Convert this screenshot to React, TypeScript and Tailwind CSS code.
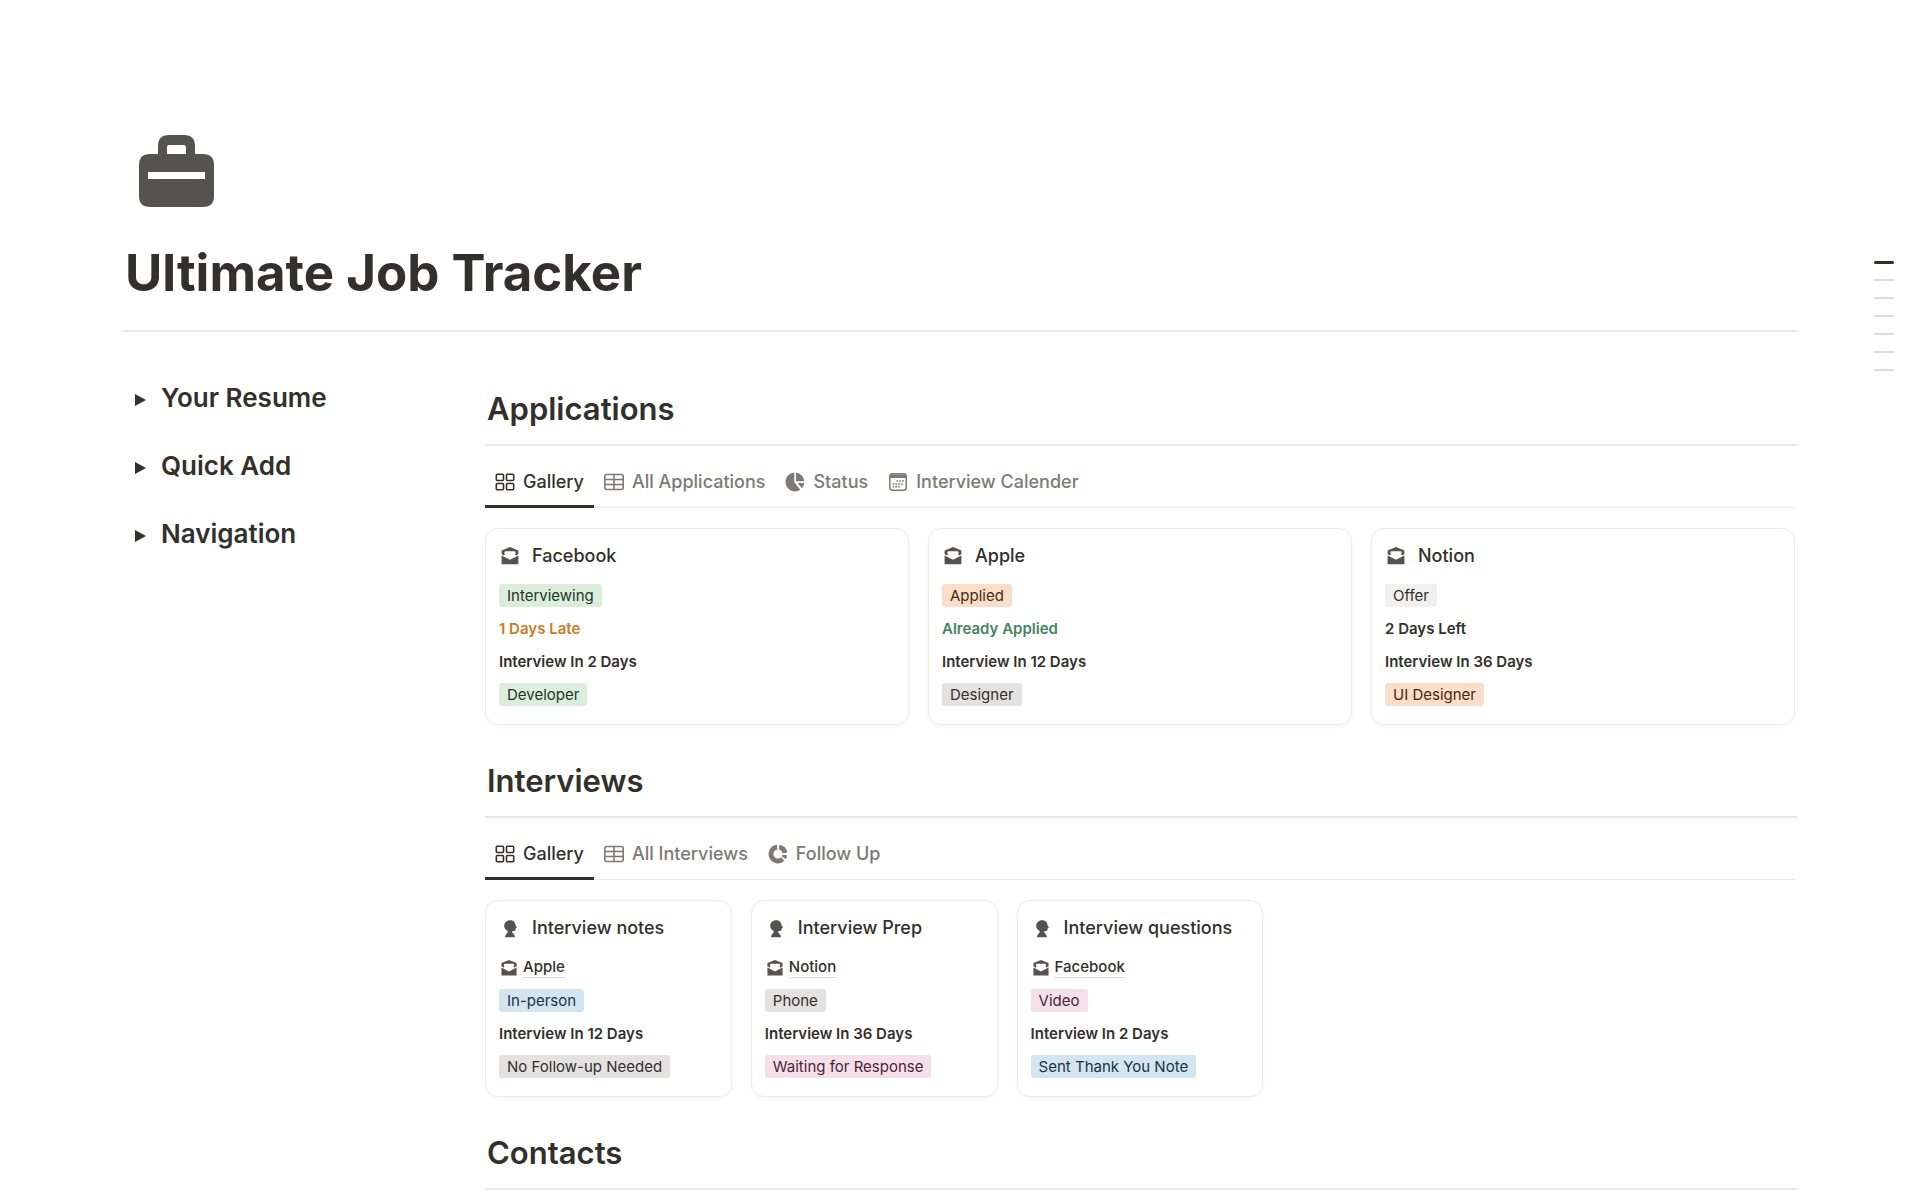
import { useState } from "react";
import type { ReactNode } from "react";
import clsx from "clsx";

type Color = "green" | "orange" | "gray" | "light" | "blue" | "pink";

type Line =
  | { kind: "tag"; text: string; color: Color }
  | { kind: "text"; text: string; tone?: "amber" | "green" }
  | { kind: "relation"; text: string };

interface Item {
  title: string;
  lines: Line[];
}

interface View {
  label: string;
  icon: ReactNode;
}

const tagColors: Record<Color, string> = {
  green: "bg-[#dbeddb] text-[#1c3829]",
  orange: "bg-[#fadec9] text-[#49290e]",
  gray: "bg-[#e3e2e0] text-[#32302c]",
  light: "bg-[#f1f0ef] text-[#32302c]",
  blue: "bg-[#d3e5ef] text-[#183347]",
  pink: "bg-[#f5e0e9] text-[#4c2337]",
};

const tones = {
  amber: "text-[#cb7b25]",
  green: "text-[#448361]",
};

const BriefcaseIcon = () => (
  <svg width="75" height="72" viewBox="0 0 75 72" fill="#55534e" aria-hidden="true">
    <path
      fillRule="evenodd"
      d="M19 19V11Q19 0 30 0H45Q56 0 56 11V19H64Q75 19 75 30V61Q75 72 64 72H11Q0 72 0 61V30Q0 19 11 19ZM28 19H47V12Q47 10 45 10H30Q28 10 28 12ZM9 37V44H66V37Z"
    />
  </svg>
);

const MailIcon = ({ size }: { size: number }) => (
  <svg width={size} height={size} viewBox="0 0 20 20" fill="#55534e" aria-hidden="true">
    <path d="M10 1 18.4 4.4V8L16.4 9.400 14.800 8.600 15.600 7.800V6.600Q15.600 5.200 14.200 5.200H5.800Q4.400 5.200 4.400 6.600V7.800L5.200 8.600 3.600 9.400 1.600 8V4.400Z" />
    <path d="M1.600 9.500 10 13.800 18.400 9.500V18.200H1.600Z" />
  </svg>
);

const HeadIcon = () => (
  <svg width="20" height="20" viewBox="0 0 20 20" fill="#55534e" aria-hidden="true">
    <path d="M10 2.300C13.200 2.300 15.400 4.300 15.500 7.200L17 9.600 15.600 10.200V11.600Q15.600 12.900 14.200 12.900H12.300V14.300C12.300 15.600 14.800 16 15 19.200H5C5.100 16.300 7.600 15.600 7.600 14V12.700C5.600 11.900 4.200 10.200 4.200 7.900 4.200 4.600 6.800 2.300 10 2.300Z" />
  </svg>
);

const GalleryIcon = () => (
  <svg width="20" height="20" viewBox="0 0 20 20" fill="none" stroke="currentColor" strokeWidth="1.600" aria-hidden="true">
    <rect x="1.300" y="2.300" width="7.200" height="6.200" rx="1" />
    <rect x="11.500" y="2.300" width="7.200" height="6.200" rx="1" />
    <rect x="1.300" y="11.500" width="7.200" height="6.200" rx="1" />
    <rect x="11.500" y="11.500" width="7.200" height="6.200" rx="1" />
  </svg>
);

const TableIcon = () => (
  <svg width="20" height="20" viewBox="0 0 20 20" fill="none" stroke="currentColor" strokeWidth="1.600" aria-hidden="true">
    <rect x="0.800" y="2.500" width="18.400" height="15" rx="2" />
    <path d="M1 7.500H19M1 12.500H19M10 2.500V17.500" />
  </svg>
);

const PieIcon = () => (
  <svg width="20" height="20" viewBox="0 0 20 20" fill="currentColor" aria-hidden="true">
    <path d="M9.300 0.600V10.200L15.300 17.700A9.400 9.400 0 1 1 9.300 0.600Z" />
    <path d="M11 0.600A9.400 9.400 0 0 1 19.300 9.300H11Z" />
    <path d="M12.600 11H19.300A9.400 9.400 0 0 1 16.900 16.300Z" />
  </svg>
);

const CalendarIcon = () => (
  <svg width="20" height="20" viewBox="0 0 20 20" fill="none" stroke="currentColor" aria-hidden="true">
    <rect x="1.800" y="1.800" width="16.400" height="16.400" rx="2.500" strokeWidth="1.500" />
    <path d="M2 4.200H18" strokeWidth="3.600" />
    <path d="M8.500 9H16M4.500 11.900H16M4.500 14.800H12.500" strokeWidth="1.500" strokeDasharray="1.700 1.100" />
  </svg>
);

const DonutIcon = () => (
  <svg width="20" height="20" viewBox="0 0 20 20" fill="none" stroke="currentColor" strokeWidth="4.800" aria-hidden="true">
    <path d="M9.100 3.200A6.900 6.900 0 1 0 14.700 15" />
    <path d="M11.100 3.200A6.900 6.900 0 0 1 16.800 9" />
    <path d="M16.800 11A6.900 6.900 0 0 1 15.800 13.800" />
  </svg>
);

const toggles = ["Your Resume", "Quick Add", "Navigation"];

const outline = ["Overview", ...toggles, "Applications", "Interviews", "Contacts"];

const applicationViews: View[] = [
  { label: "Gallery", icon: <GalleryIcon /> },
  { label: "All Applications", icon: <TableIcon /> },
  { label: "Status", icon: <PieIcon /> },
  { label: "Interview Calender", icon: <CalendarIcon /> },
];

const interviewViews: View[] = [
  { label: "Gallery", icon: <GalleryIcon /> },
  { label: "All Interviews", icon: <TableIcon /> },
  { label: "Follow Up", icon: <DonutIcon /> },
];

const applications: Item[] = [
  {
    title: "Facebook",
    lines: [
      { kind: "tag", text: "Interviewing", color: "green" },
      { kind: "text", text: "1 Days Late", tone: "amber" },
      { kind: "text", text: "Interview In 2 Days" },
      { kind: "tag", text: "Developer", color: "green" },
    ],
  },
  {
    title: "Apple",
    lines: [
      { kind: "tag", text: "Applied", color: "orange" },
      { kind: "text", text: "Already Applied", tone: "green" },
      { kind: "text", text: "Interview In 12 Days" },
      { kind: "tag", text: "Designer", color: "gray" },
    ],
  },
  {
    title: "Notion",
    lines: [
      { kind: "tag", text: "Offer", color: "light" },
      { kind: "text", text: "2 Days Left" },
      { kind: "text", text: "Interview In 36 Days" },
      { kind: "tag", text: "UI Designer", color: "orange" },
    ],
  },
];

const interviews: Item[] = [
  {
    title: "Interview notes",
    lines: [
      { kind: "relation", text: "Apple" },
      { kind: "tag", text: "In-person", color: "blue" },
      { kind: "text", text: "Interview In 12 Days" },
      { kind: "tag", text: "No Follow-up Needed", color: "gray" },
    ],
  },
  {
    title: "Interview Prep",
    lines: [
      { kind: "relation", text: "Notion" },
      { kind: "tag", text: "Phone", color: "gray" },
      { kind: "text", text: "Interview In 36 Days" },
      { kind: "tag", text: "Waiting for Response", color: "pink" },
    ],
  },
  {
    title: "Interview questions",
    lines: [
      { kind: "relation", text: "Facebook" },
      { kind: "tag", text: "Video", color: "pink" },
      { kind: "text", text: "Interview In 2 Days" },
      { kind: "tag", text: "Sent Thank You Note", color: "blue" },
    ],
  },
];

function CardLine({ line }: { line: Line }) {
  if (line.kind === "tag") {
    return (
      <span className={clsx("rounded-[3px] px-2 text-[15px] leading-[23px]", tagColors[line.color])}>
        {line.text}
      </span>
    );
  }
  if (line.kind === "relation") {
    return (
      <a href="#" className="flex h-[23px] items-center gap-[5px] pl-px text-[15px] font-medium">
        <MailIcon size={18} />
        <span className="border-b border-[#d9d8d6] leading-5">{line.text}</span>
      </a>
    );
  }
  return (
    <span className={clsx("text-[15px] font-semibold leading-[23px]", line.tone && tones[line.tone])}>
      {line.text}
    </span>
  );
}

function Card({ item, icon }: { item: Item; icon: ReactNode }) {
  return (
    <article className="rounded-[13px] border border-[#ecebea] px-[13px] pt-[15px] pb-[18px] shadow-[0_2px_4px_rgba(0,0,0,0.04)]">
      <h3 className="flex items-center gap-3 pl-px text-lg font-medium leading-6">
        {icon}
        {item.title}
      </h3>
      <div className="mt-4 flex flex-col items-start gap-[10px]">
        {item.lines.map((line) => (
          <CardLine key={line.text} line={line} />
        ))}
      </div>
    </article>
  );
}

function SectionTitle({ children }: { children: ReactNode }) {
  return (
    <h2 className="border-b-2 border-[#e9e8e7] pb-[15px] pl-[2px] text-[31px] font-semibold leading-10">
      {children}
    </h2>
  );
}

function Tabs({ views }: { views: View[] }) {
  const [active, setActive] = useState(0);

  return (
    <div role="tablist" className="mt-3 mr-[2px] flex border-b border-[#ecebea]">
      {views.map((v, i) => (
        <button
          key={v.label}
          type="button"
          role="tab"
          aria-selected={i === active}
          onClick={() => setActive(i)}
          className={clsx(
            "-mb-px flex cursor-pointer items-center gap-2 border-b-3 px-[10px] pt-3 pb-[11px] text-lg font-medium leading-6",
            i === active ? "border-[#32302c]" : "border-transparent text-[#7d7a75]"
          )}
        >
          {v.icon}
          {v.label}
        </button>
      ))}
    </div>
  );
}

export default function App() {
  return (
    <div className="relative min-h-screen bg-white px-[123px] pt-[135px] font-[Inter,'Liberation_Sans',sans-serif] text-[#32302c]">
      <header className="border-b-2 border-[#e9e8e7] pb-[23px]">
        <div className="pl-4">
          <BriefcaseIcon />
        </div>
        <h1 className="mt-8 pl-[2px] text-[51px] font-bold leading-[68px]">Ultimate Job Tracker</h1>
      </header>

      <nav aria-label="Outline" className="absolute top-[253px] right-[26px] flex w-5 flex-col">
        {outline.map((name, i) => (
          <a key={name} href="#" aria-label={name} className="flex h-[18px] items-center">
            <span className={clsx("w-full rounded-full", i === 0 ? "h-[3px] bg-[#32302c]" : "h-[2px] bg-[#dddcdb]")} />
          </a>
        ))}
      </nav>

      <div className="grid grid-cols-[316px_minmax(0,1fr)] gap-[46px]">
        <aside className="flex flex-col items-start gap-9 pt-[50px]">
          {toggles.map((name) => (
            <button
              key={name}
              type="button"
              aria-expanded="false"
              className="flex cursor-pointer items-center gap-[15px] pl-3 text-[26px] font-semibold leading-8"
            >
              <svg width="11" height="12" viewBox="0 0 11 12" fill="currentColor" aria-hidden="true" className="mt-1">
                <path d="M0 0 11 6 0 12Z" />
              </svg>
              {name}
            </button>
          ))}
        </aside>

        <main className="pt-[57px]">
          <section>
            <SectionTitle>Applications</SectionTitle>
            <Tabs views={applicationViews} />
            <div className="mt-5 mr-[2px] grid grid-cols-3 gap-[19px]">
              {applications.map((item) => (
                <Card key={item.title} item={item} icon={<MailIcon size={20} />} />
              ))}
            </div>
          </section>

          <section className="mt-9">
            <SectionTitle>Interviews</SectionTitle>
            <Tabs views={interviewViews} />
            <div className="mt-5 mr-[2px] grid grid-cols-5 gap-[19px]">
              {interviews.map((item) => (
                <Card key={item.title} item={item} icon={<HeadIcon />} />
              ))}
            </div>
          </section>

          <section className="mt-9">
            <SectionTitle>Contacts</SectionTitle>
          </section>
        </main>
      </div>
    </div>
  );
}
